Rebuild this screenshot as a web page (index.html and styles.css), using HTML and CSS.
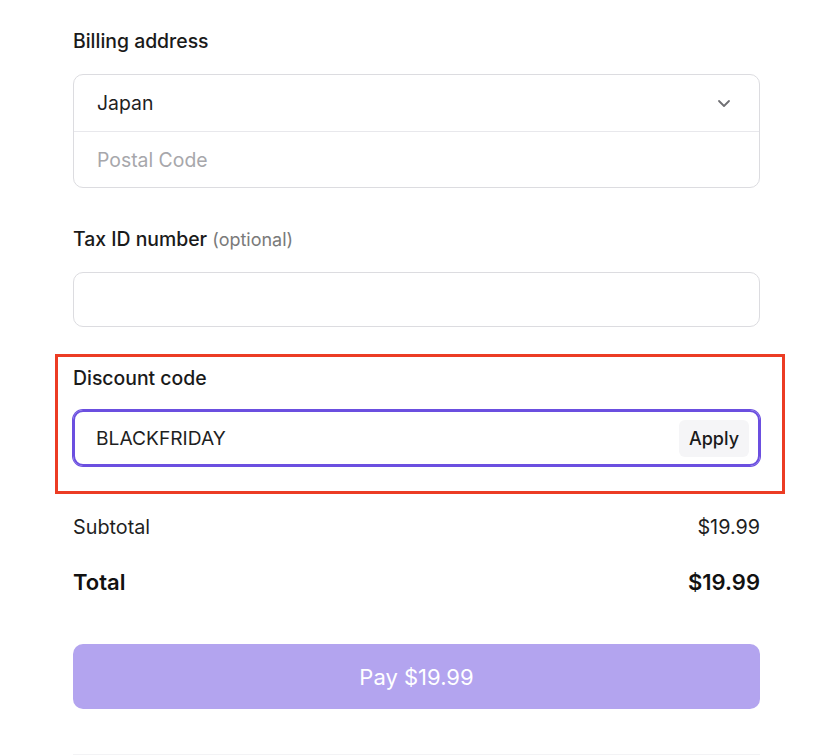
FILE: index.html
```html
<!DOCTYPE html>
<html>
<head>
<meta charset="utf-8">
<link rel="stylesheet" href="styles.css">
</head>
<body>
<div class="page">
  <div class="label">Billing address</div>
  <div class="group">
    <div class="row select">
      <span class="value">Japan</span>
      <svg class="chev" width="14" height="9" viewBox="0 0 14 9"><path d="M2 2 L7 7 L12 2" fill="none" stroke="#6f6f73" stroke-width="1.8" stroke-linecap="round" stroke-linejoin="round"/></svg>
    </div>
    <div class="row">
      <span class="placeholder">Postal Code</span>
    </div>
  </div>

  <div class="label tax">Tax ID number <span class="opt">(optional)</span></div>
  <div class="input"></div>

  <div class="highlight">
    <div class="label">Discount code</div>
    <div class="input focus">
      <span class="value">BLACKFRIDAY</span>
      <span class="apply">Apply</span>
    </div>
  </div>

  <div class="line sub"><span>Subtotal</span><span>$19.99</span></div>
  <div class="line total"><span>Total</span><span>$19.99</span></div>

  <div class="pay">Pay $19.99</div>
  <div class="bottom"></div>
</div>
</body>
</html>
```
FILE: styles.css
```css
* { box-sizing: border-box; }
html, body { margin: 0; background: #fff; }
body { font-family: Inter, "Noto Sans", sans-serif; color: #1a1a1a; }
.page { width: 828px; padding: 29px 68px 0 73px; }
.label { height: 24px; font-size: 19.4px; line-height: 24px; font-weight: 500; color: #1a1a1a; }
.opt { font-weight: 400; font-size: 18px; line-height: 20px; color: #7a7a7a; }
.group { margin-top: 21px; border: 1px solid #dcdce0; border-radius: 10px; }
.row { height: 56px; display: flex; align-items: center; padding: 0 23px; font-size: 19.4px; }
.row + .row { border-top: 1px solid #e8e8ec; height: 56px; }
.select { justify-content: space-between; padding-right: 28px; }
.value { color: #1f1f1f; }
.placeholder { color: #a7a7ab; }
.tax { margin-top: 39px; }
.input { margin-top: 21px; height: 55px; border: 1px solid #dcdce0; border-radius: 10px; }
.highlight { margin: 27px -25px 0 -18px; border: 3px solid #ec3c24; padding: 9px 22px 25px 15px; }
.input.focus { margin-top: 20px; height: 56px; border: 2px solid #6b4fe0; box-shadow: 0 0 0 1px #6b4fe0; display: flex; align-items: center; justify-content: space-between; padding: 0 9px 0 21px; font-size: 19.2px; }
.apply { background: #f5f5f7; border-radius: 6px; padding: 0 10px; height: 37px; line-height: 37px; font-size: 18px; font-weight: 500; color: #1a1a1a; }
.line { display: flex; justify-content: space-between; }
.sub { margin-top: 21px; font-size: 19.8px; line-height: 24px; color: #1f1f1f; }
.total { margin-top: 29px; font-size: 22px; line-height: 28px; font-weight: 600; color: #111; }
.pay { margin-top: 48px; height: 65px; border-radius: 10px; background: #b3a4ef; color: #fff; font-size: 22px; display: flex; align-items: center; justify-content: center; }
.bottom { margin-top: 45px; height: 4px; border-top: 1px solid #f3f3f5; }
```
